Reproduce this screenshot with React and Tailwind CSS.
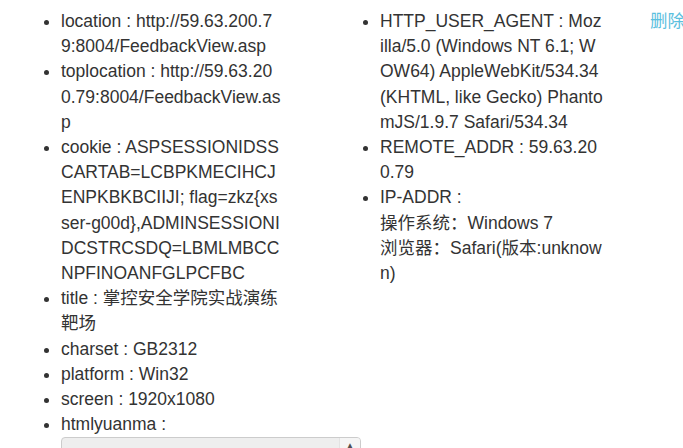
const leftItems = [
  {
    k: "location",
    v: (
      <>
        http://59.63.200.7
        <br />
        9:8004/FeedbackView.asp
      </>
    ),
  },
  { k: "toplocation", v: "http://59.63.200.79:8004/FeedbackView.asp" },
  {
    k: "cookie",
    v: "ASPSESSIONIDSSCARTAB=LCBPKMECIHCJENPKBKBCIIJI; flag=zkz{xsser-g00d},ADMINSESSIONIDCSTRCSDQ=LBMLMBCCNPFINOANFGLPCFBC",
  },
  { k: "title", v: "掌控安全学院实战演练靶场" },
  { k: "charset", v: "GB2312" },
  { k: "platform", v: "Win32" },
  { k: "screen", v: "1920x1080" },
];

const App = () => {
  return (
    <div
      className="flex items-start pt-[9px] text-[17.5px] leading-[25.2px] text-[#333]"
      style={{ fontFamily: '"Liberation Sans", "Noto Sans CJK SC", sans-serif' }}
    >
      {/* left column */}
      <ul className="list-disc pl-[61px] w-[282px] shrink-0 break-all">
        {leftItems.map((it) => (
          <li key={it.k}>
            {it.k} : {it.v}
          </li>
        ))}
        <li>
          htmlyuanma :
          <div className="relative w-[300px]">
            <textarea
              readOnly
              className="block w-[300px] h-[60px] bg-[#eee] border border-[#ccc] rounded-[4px] resize-none"
            />
            {/* fake scrollbar */}
            <div className="absolute right-px top-px w-[21px] h-[58px] bg-[#f5f5f5] border-l border-[#e3e3e3] rounded-tr-[3px] flex justify-center">
              <span className="text-[8px] leading-[16px] text-[#505050]">▲</span>
            </div>
          </div>
        </li>
      </ul>

      {/* right column */}
      <ul className="list-disc pl-[98px] w-[321px] shrink-0 break-all">
        <li>
          HTTP_USER_AGENT : Mozilla/5.0 (Windows NT 6.1; WOW64)
          AppleWebKit/534.34 (KHTML, like Gecko) PhantomJS/1.9.7
          Safari/534.34
        </li>
        <li>REMOTE_ADDR : 59.63.200.79</li>
        <li>
          IP-ADDR :
          <br />
          操作系统：Windows 7
          <br />
          浏览器：Safari(版本:unknown)
        </li>
      </ul>

      <a href="#" className="ml-[47px] text-[#5bc0de] whitespace-nowrap">
        删除
      </a>
    </div>
  );
};

export default App;
